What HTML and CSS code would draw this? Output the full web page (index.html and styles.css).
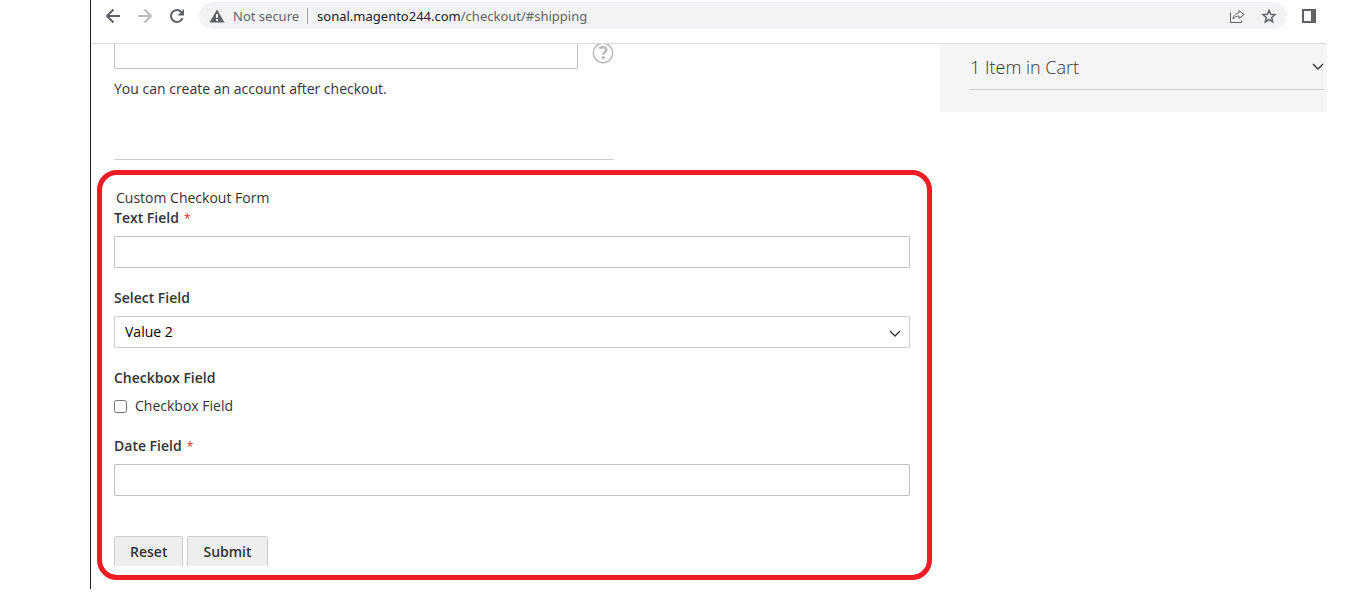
FILE: index.html
```html
<!DOCTYPE html>
<html lang="en">
<head>
    <meta charset="UTF-8">
    <meta name="viewport" content="width=device-width, initial-scale=1.0">
    <title>Checkout</title>
    <link rel="stylesheet" href="styles.css">
</head>
<body>
    <div class="window">
        <header class="toolbar">
            <nav class="nav-buttons">
                <button type="button" aria-label="Back">
                    <svg width="16" height="16" viewBox="0 0 16 16" fill="none" stroke="#5f6368" stroke-width="2"><path d="M15 8H2M8.500 1.500L2 8l6.500 6.500"/></svg>
                </button>
                <button type="button" aria-label="Forward">
                    <svg width="16" height="16" viewBox="0 0 16 16" fill="none" stroke="#babcbe" stroke-width="2"><path d="M1 8h13M7.500 1.500L14 8l-6.500 6.500"/></svg>
                </button>
                <button type="button" aria-label="Reload">
                    <svg width="16" height="16" viewBox="0 0 16 16"><path d="M13.500 10.200A6 6 0 1 1 12.400 4" fill="none" stroke="#5f6368" stroke-width="2"/><path d="M15 1v6.500H8.500z" fill="#5f6368"/></svg>
                </button>
            </nav>
            <div class="address-bar">
                <svg width="16" height="16" viewBox="0 0 16 16"><path d="M8 1.500L15.500 14.500H.5z" fill="#5f6368"/><path d="M7 6h2v4H7zM7 11h2v2H7z" fill="#f1f3f4"/></svg>
                <span class="security">Not secure</span>
                <span class="url"><span class="host">sonal.magento244.com</span>/checkout/#shipping</span>
                <button type="button" aria-label="Share">
                    <svg width="16" height="16" viewBox="0 0 16 16" fill="none" stroke="#5f6368" stroke-width="1"><path d="M1.500 4.500v10h11v-2"/><path d="M4 11C4.500 7.500 6.500 5 10 5V2.500L15 6.500l-5 4V8C7.500 8 5.500 9 4 11z"/></svg>
                </button>
                <button type="button" aria-label="Bookmark">
                    <svg width="16" height="16" viewBox="0 0 16 16" fill="none" stroke="#5f6368" stroke-width="1.500"><path d="M8 2.300l1.700 4 4.300.4-3.300 2.800 1 4.300L8 11.500l-3.700 2.300 1-4.300L2 6.700l4.300-.4z"/></svg>
                </button>
            </div>
            <button type="button" class="side-panel" aria-label="Side panel">
                <svg width="14" height="14" viewBox="0 0 14 14"><path d="M0 0h14v14H0zM2 2v10h7V2z" fill="#5f6368" fill-rule="evenodd"/></svg>
            </button>
        </header>

        <main class="page">
            <section class="checkout">
                <form class="guest">
                    <div class="email-row">
                        <input type="email" class="input-text email" aria-label="Email Address">
                        <button type="button" class="help" aria-label="Help">
                            <svg width="22" height="22" viewBox="0 0 22 22" fill="none" stroke="#bbb"><circle cx="11" cy="11" r="9.700" stroke-width="1.500"/><path d="M7.200 6.500C8.300 5.700 9.600 5.300 11 5.300c2.100 0 3.300 1 3.300 2.700 0 2.300-3.100 2.300-3.100 4.700" stroke-width="2.600"/><path d="M9.700 14.300h3v2.700h-3z" fill="#bbb" stroke="none"/></svg>
                        </button>
                    </div>
                    <p class="note">You can create an account after checkout.</p>
                </form>

                <form class="custom-form">
                    <fieldset>
                        <legend>Custom Checkout Form</legend>
                        <div class="field required">
                            <label for="text-field">Text Field</label>
                            <input type="text" id="text-field" class="input-text">
                        </div>
                        <div class="field">
                            <label for="select-field">Select Field</label>
                            <div class="select-wrap">
                                <select id="select-field">
                                    <option>Value 1</option>
                                    <option selected>Value 2</option>
                                </select>
                                <svg class="arrow" width="12" height="8" viewBox="0 0 12 8" fill="none" stroke="#333" stroke-width="1.300"><path d="M1 1l5 5 5-5"/></svg>
                            </div>
                        </div>
                        <div class="field">
                            <span class="label">Checkbox Field</span>
                            <div class="choice">
                                <input type="checkbox" id="checkbox-field">
                                <label for="checkbox-field">Checkbox Field</label>
                            </div>
                        </div>
                        <div class="field required">
                            <label for="date-field">Date Field</label>
                            <input type="text" id="date-field" class="input-text">
                        </div>
                    </fieldset>
                    <div class="actions">
                        <button type="reset">Reset</button>
                        <button type="submit">Submit</button>
                    </div>
                </form>
            </section>

            <aside class="summary">
                <button type="button" class="cart-toggle">
                    1 Item in Cart
                    <svg width="12" height="8" viewBox="0 0 12 8" fill="none" stroke="#333" stroke-width="1.300"><path d="M1 1l5 5 5-5"/></svg>
                </button>
            </aside>
        </main>
    </div>
</body>
</html>
```

FILE: styles.css
```css
* {
    box-sizing: border-box;
}
body {
    margin: 0;
    background-color: #fff;
    color: #333;
    font-family: "Open Sans", "Noto Sans", sans-serif;
    font-size: 14px;
    line-height: 20px;
}
button, input, select {
    font: inherit;
    color: inherit;
    margin: 0;
}
button {
    padding: 0;
    border: none;
    background: none;
    cursor: pointer;
}
svg {
    display: block;
    flex-shrink: 0;
}
.window {
    margin: 0 39px 3px 90px;
    border-left: 1px solid #222;
}

/* browser toolbar */
.toolbar {
    display: flex;
    align-items: flex-start;
    height: 44px;
    padding-top: 2px;
    border-bottom: 1px solid #dadce0;
}
.nav-buttons {
    display: flex;
    gap: 16px;
    height: 28px;
    align-items: center;
    margin: 0 14px;
}
.address-bar {
    display: flex;
    flex: 1;
    align-items: center;
    height: 27px;
    padding: 0 10px;
    border-radius: 14px;
    background-color: #f1f3f4;
    color: #5f6368;
    font-family: "Noto Sans", "Open Sans", sans-serif;
    font-size: 13px;
}
.security {
    margin-left: 8px;
    padding-right: 8px;
    border-right: 1px solid #9aa0a6;
    line-height: 16px;
}
.url {
    flex: 1;
    margin-left: 9px;
}
.host {
    color: #202124;
}
.address-bar button {
    margin-left: 16px;
}
.side-panel {
    margin: 7px 11px 0 15px;
}

/* checkout page */
.page {
    display: grid;
    grid-template-columns: 1fr 387px;
    align-items: start;
    overflow: hidden;
}
.guest {
    width: 500px;
    margin: -7px 0 10px 23px;
    padding-bottom: 60px;
    border-bottom: 1px solid #ccc;
}
.email-row {
    display: flex;
    align-items: center;
    gap: 14px;
}
.input-text {
    display: block;
    width: 100%;
    height: 32px;
    padding: 0 9px;
    border: 1px solid #c2c2c2;
    border-radius: 1px;
    background-color: #fff;
}
.input-text.email {
    width: 464px;
}
.note {
    margin: 10px 0 0;
}
.custom-form {
    margin: 0 8px 9px 6px;
    padding: 13px 17px 9px 12px;
    border: 5px solid #ed1c24;
    border-radius: 20px;
}
fieldset {
    margin: 0;
    padding: 0;
    border: none;
}
legend {
    padding: 0 2px;
}
.field {
    margin-bottom: 20px;
}
.field > label,
.label {
    display: block;
    margin-bottom: 8px;
    font-weight: 600;
}
.required > label::after {
    content: "*";
    margin-left: 5px;
    color: #e02b27;
    font-size: 12px;
    font-weight: 400;
    line-height: 1;
}
.select-wrap {
    position: relative;
}
select {
    display: block;
    width: 100%;
    height: 32px;
    padding: 0 10px;
    border: 1px solid #ccc;
    border-radius: 1px;
    background-color: #fff;
    color: #000;
    appearance: none;
}
.arrow {
    position: absolute;
    top: 14px;
    right: 9px;
    pointer-events: none;
}
.choice {
    display: flex;
    align-items: center;
    gap: 8px;
}
.actions {
    display: flex;
    gap: 4px;
    height: 30px;
    margin-top: 40px;
    overflow: hidden;
}
fieldset + .actions {
    margin-top: 20px;
}
.actions button {
    height: 32px;
    padding: 0 15px;
    border: 1px solid #ccc;
    border-radius: 3px;
    background-color: #eee;
    font-weight: 600;
}

/* order summary */
.summary {
    padding: 10px 3px 22px 30px;
    background-color: #f5f5f5;
}
.cart-toggle {
    display: flex;
    align-items: center;
    justify-content: space-between;
    width: 100%;
    padding-bottom: 9px;
    border-bottom: 1px solid #ccc;
    font-size: 18px;
    font-weight: 300;
    line-height: 26px;
}
```
